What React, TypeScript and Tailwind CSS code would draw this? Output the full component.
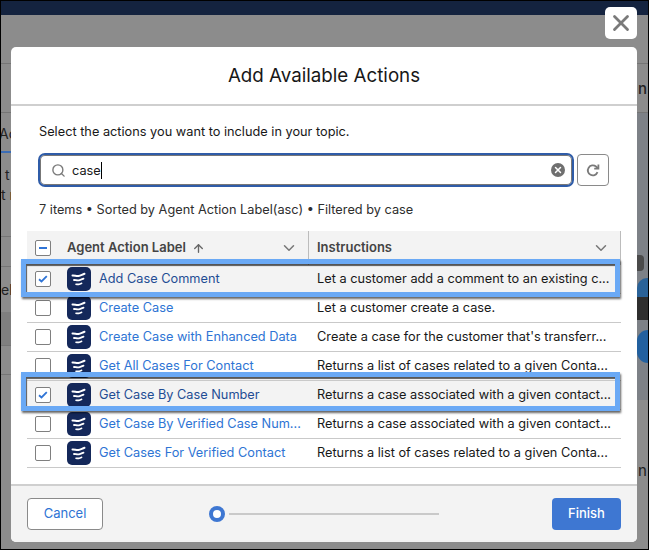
import { ArrowUp, ChevronDown, Search, X } from "lucide-react";

const rows = [
  { label: "Add Case Comment", text: "Let a customer add a comment to an existing c...", selected: true },
  { label: "Create Case", text: "Let a customer create a case.", selected: false },
  { label: "Create Case with Enhanced Data", text: "Create a case for the customer that's transferr...", selected: false },
  { label: "Get All Cases For Contact", text: "Returns a list of cases related to a given Conta...", selected: false },
  { label: "Get Case By Case Number", text: "Returns a case associated with a given contact...", selected: true },
  { label: "Get Case By Verified Case Num...", text: "Returns a case associated with a given contact...", selected: false },
  { label: "Get Cases For Verified Contact", text: "Returns a list of cases related to a given Conta...", selected: false },
];

function AgentIcon() {
  return (
    <div className="w-6 h-6 rounded-[5px] bg-[#14285a] flex items-center justify-center shrink-0">
      <svg width="24" height="24" viewBox="0 0 24 24" fill="none" stroke="#fff" strokeLinecap="round">
        <path d="M5.500 8.400c2.500-.2 3.600 1 6 .6 2-.4 3.600-1.400 6-2.200" strokeWidth="2" />
        <path d="M7 13c2 .1 3 .7 5 .3 1.600-.3 2.800-1 4.500-1.700" strokeWidth="1.800" />
        <path d="M9 17.200c1.200.2 2 .3 3.400 0 .8-.2 1.400-.6 2.200-.9" strokeWidth="1.600" />
      </svg>
    </div>
  );
}

function Box({ children }: { children?: React.ReactNode }) {
  return (
    <div className="w-4 h-4 bg-white rounded-[2px] border border-[#7f7f7f] flex items-center justify-center shrink-0">
      {children}
    </div>
  );
}

function Check() {
  return (
    <svg width="10" height="8" viewBox="0 0 10 8" fill="none">
      <path d="M1 4.300 3.500 6.500 8.800 1.200" stroke="#2f74d6" strokeWidth="1.800" />
    </svg>
  );
}

function Line({ mt }: { mt: string }) {
  return <div className={`h-px bg-[#757575] ${mt}`} />;
}

export default function App() {
  return (
    <div className="w-[649px] h-[550px] bg-black p-px overflow-hidden font-['Inter','Liberation_Sans',sans-serif] text-[12.75px] text-[#181818]">
      <div className="h-[14px] bg-[#14233f]" />
      <div className="flex h-[534px] bg-[#8c8c8c]">
        {/* left backdrop strip */}
        <div className="w-[10px] shrink-0 overflow-hidden text-[#222] text-[14px] leading-none">
          <Line mt="mt-[48px]" />
          <Line mt="mt-[48px]" />
          <div className="mt-[14px] whitespace-nowrap -ml-[2px]">Ac</div>
          <div className="h-[2px] mt-[10px] bg-[#3a6cb5]" />
          <div className="mt-[15px] pl-1">t</div>
          <div className="mt-[6px] whitespace-nowrap">t r</div>
          <Line mt="mt-[34px]" />
          <Line mt="mt-[29px]" />
          <div className="mt-[16px] whitespace-nowrap">el</div>
          <div className="h-[33px] mt-[15px] bg-[#7f7f7f]" />
          <Line mt="mt-0" />
          <Line mt="mt-[28px]" />
        </div>

        {/* modal column */}
        <div className="relative w-[626px] shrink-0 mt-[32px] h-[495px] bg-white rounded-[5px] flex flex-col overflow-visible">
          <button className="absolute -top-[40px] right-0 w-8 h-8 bg-white rounded-[5px] flex items-center justify-center text-[#7a7a7a]">
            <X size={26} strokeWidth={2.600} />
          </button>

          <div className="h-[59px] flex items-center justify-center border-b-2 border-[#cfcfcf] shrink-0">
            <h2 className="text-[18.750px] leading-none text-[#181818] mt-[2px]">Add Available Actions</h2>
          </div>

          <div className="flex-1 flex flex-col">
            <p className="ml-[28px] mt-[18px] leading-[16px]">Select the actions you want to include in your topic.</p>

            <div className="flex items-center ml-[27px] mt-[13px] gap-[3px]">
              <div className="w-[536px] h-[34px] rounded-[7px] border-2 border-[#2f5ca8] bg-white shadow-[inset_0_0_0_1px_#777] flex items-center pl-[11px] pr-[7px]">
                <Search size={15} strokeWidth={2.200} className="text-[#7a7a7a]" />
                <span className="ml-[6px] text-[#181818] border-r border-black leading-[17px] pr-0">case</span>
                <div className="flex-1" />
                <div className="w-[14px] h-[14px] rounded-full bg-[#6f6f6f] flex items-center justify-center">
                  <X size={10} strokeWidth={3.500} className="text-white" />
                </div>
              </div>
              <div className="w-8 h-8 rounded-[4px] border border-[#8a8a8a] flex items-center justify-center">
                <svg width="14" height="14" viewBox="0 0 14 14" fill="none" stroke="#7a7a7a" strokeWidth="1.800">
                  <path d="M11.500 9.200A5 5 0 1 1 10 3.500L12 5.200" />
                  <path d="M12.400 1.500V5.700H8.200" />
                </svg>
              </div>
            </div>

            <p className="ml-[28px] mt-[15px] leading-[16px] text-[#2e2e2e]">
              7 items • Sorted by Agent Action Label(asc) • Filtered by case
            </p>

            <div className="relative mx-[16px] mt-[13px]">
              <div className="h-[34px] flex bg-[#f3f3f3] items-center font-semibold text-[13px] text-[#444]">
                <div className="w-[32px] pl-[8px] shrink-0">
                  <Box>
                    <div className="w-2 h-[2px] bg-[#2f74d6]" />
                  </Box>
                </div>
                <div className="w-[250px] shrink-0 h-full flex items-center pl-[8px] pr-[10px] border-r border-[#bcbcbc]">
                  <span>Agent Action Label</span>
                  <ArrowUp size={13} strokeWidth={2.500} className="ml-[6px] text-[#666]" />
                  <div className="flex-1" />
                  <ChevronDown size={18} className="text-[#777]" />
                </div>
                <div className="flex-1 h-full flex items-center pl-[8px] pr-[10px] border-r border-[#bcbcbc]">
                  <span>Instructions</span>
                  <div className="flex-1" />
                  <ChevronDown size={18} className="text-[#777]" />
                </div>
              </div>

              {rows.map((r) => (
                <div
                  key={r.label}
                  className={`h-[29px] flex items-center border-b border-[#c9c9c9] whitespace-nowrap ${
                    r.selected ? "bg-[#f3f3f3]" : "bg-white"
                  }`}
                >
                  <div className="w-[32px] pl-[8px] shrink-0">
                    <Box>{r.selected && <Check />}</Box>
                  </div>
                  <div className="w-[250px] shrink-0 flex items-center pl-[8px] gap-2">
                    <AgentIcon />
                    <span className={r.selected ? "text-[#1f4d94]" : "text-[#2e74d4]"}>{r.label}</span>
                  </div>
                  <div className="pl-[8px]">{r.text}</div>
                </div>
              ))}

              {/* tutorial highlights lying over the table */}
              <div className="absolute left-[-6px] right-[1px] top-[28px] h-[38px] border-[5px] border-[#6aa9f5] shadow-[1px_2px_2px_rgba(0,0,0,0.6),inset_1px_2px_1px_rgba(0,0,0,0.65)]" />
              <div className="absolute left-[-6px] right-[1px] top-[141px] h-[39px] border-[5px] border-[#6aa9f5] shadow-[1px_2px_2px_rgba(0,0,0,0.6),inset_1px_2px_1px_rgba(0,0,0,0.65)]" />
            </div>
          </div>

          <div className="h-[58px] shrink-0 bg-[#f3f3f3] border-t-2 border-[#cfcfcf] rounded-b-[5px] flex items-center px-[16px] text-[13px]">
            <button className="w-[76px] h-8 rounded-[4px] border border-[#8a8a8a] bg-white text-[#2e74d4]">Cancel</button>
            <div className="ml-[106px] flex items-center gap-[4px]">
              <div className="w-4 h-4 rounded-full border-[4px] border-[#3e77d2] bg-white" />
              <div className="w-[210px] h-[2px] bg-[#c9c9c9]" />
            </div>
            <div className="flex-1" />
            <button className="w-[69px] h-8 rounded-[4px] bg-[#3e77d2] text-white font-medium">Finish</button>
          </div>
        </div>

        {/* right backdrop strip */}
        <div className="w-[11px] shrink-0 overflow-hidden text-[#222] flex flex-col">
          <Line mt="mt-[48px]" />
          <div className="h-[48px] pt-[17px] pl-px text-[15px] font-medium leading-none">n</div>
          <Line mt="mt-0" />
          <div className="h-[287px] bg-[#7d8187] flex flex-col">
            <div className="h-[142px]" />
            <div className="h-[16px] w-[7px] bg-[#4a4a4a] rounded-r-[4px]" />
            <div className="h-[7px]" />
            <div className="h-[19px] bg-[#2a6298] rounded-tl-[10px]" />
            <div className="h-[23px] bg-[#2e2e2e]" />
            <div className="h-[10px]" />
            <div className="h-[33px] bg-[#22609f] rounded-l-full" />
          </div>
          <div className="mt-[63px] pl-px text-[15px] leading-none">n</div>
        </div>
      </div>
    </div>
  );
}
